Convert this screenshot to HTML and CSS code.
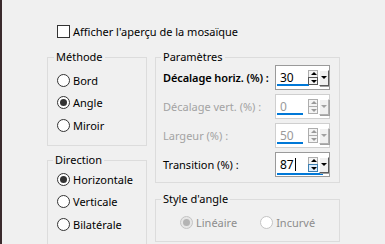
FILE: index.html
```html
<!DOCTYPE html>
<html lang="fr">

<head>
    <meta charset="UTF-8">
    <title>Mosaïque</title>
    <link rel="stylesheet" href="styles.css">
</head>

<body>
    <div class="dialog">
        <label class="check-row">
            <span class="checkbox"></span>
            Afficher l'aperçu de la mosaïque
        </label>

        <div class="columns">
            <div class="col-left">
                <fieldset class="group group-method">
                    <legend>Méthode</legend>
                    <div class="radio-row"><span class="radio"></span>Bord</div>
                    <div class="radio-row"><span class="radio checked"></span>Angle</div>
                    <div class="radio-row"><span class="radio"></span>Miroir</div>
                </fieldset>

                <fieldset class="group group-direction">
                    <legend>Direction</legend>
                    <div class="radio-row"><span class="radio checked"></span>Horizontale</div>
                    <div class="radio-row"><span class="radio"></span>Verticale</div>
                    <div class="radio-row"><span class="radio"></span>Bilatérale</div>
                </fieldset>
            </div>

            <div class="col-right">
                <fieldset class="group group-params">
                    <legend>Paramètres</legend>
                    <div class="param-row">
                        <span class="param-label focus">Décalage horiz. (%) :</span>
                        <div class="spin">
                            <span class="spin-value">30</span>
                            <span class="spin-bar"></span>
                            <span class="spin-buttons"><span class="up"></span><span class="down active"></span></span>
                            <span class="drop"></span>
                        </div>
                    </div>
                    <div class="param-row disabled">
                        <span class="param-label">Décalage vert. (%) :</span>
                        <div class="spin">
                            <span class="spin-value">0</span>
                            <span class="spin-bar short"></span>
                            <span class="spin-buttons"><span class="up"></span><span class="down"></span></span>
                            <span class="drop"></span>
                        </div>
                    </div>
                    <div class="param-row disabled">
                        <span class="param-label">Largeur (%) :</span>
                        <div class="spin">
                            <span class="spin-value">50</span>
                            <span class="spin-bar short"></span>
                            <span class="spin-buttons"><span class="up"></span><span class="down"></span></span>
                            <span class="drop"></span>
                        </div>
                    </div>
                    <div class="param-row">
                        <span class="param-label">Transition (%) :</span>
                        <div class="spin">
                            <span class="spin-value">87<span class="caret"></span></span>
                            <span class="spin-bar long"></span>
                            <span class="spin-buttons"><span class="up"></span><span class="down hover"></span></span>
                            <span class="drop"></span>
                        </div>
                    </div>
                </fieldset>

                <fieldset class="group group-style">
                    <legend>Style d'angle</legend>
                    <div class="style-row">
                        <div class="radio-row disabled"><span class="radio checked"></span>Linéaire</div>
                        <div class="radio-row disabled"><span class="radio"></span>Incurvé</div>
                    </div>
                </fieldset>
            </div>
        </div>
    </div>
</body>

</html>
```

FILE: styles.css
```css
body {
    margin: 0;
    background-color: #f0f0f0;
    font-family: "Noto Sans", sans-serif;
    font-size: 11px;
    color: #000;
    border-left: 2px solid #3a2a2c;
    height: 244px;
    box-sizing: border-box;
    overflow: hidden;
}

.dialog {
    padding: 23px 0 0 45px;
}

.check-row {
    display: flex;
    align-items: center;
    gap: 3px;
    height: 16px;
    margin-left: 10px;
}

.checkbox {
    width: 11px;
    height: 11px;
    border: 1px solid #333;
    background-color: #fff;
}

.columns {
    display: flex;
    gap: 8px;
    margin-top: 10px;
}

.col-left {
    width: 100px;
}

.col-right {
    width: 185px;
}

.group {
    margin: 0;
    border: 1px solid #dcdcdc;
    border-radius: 0;
    min-width: 0;
    box-sizing: border-box;
}

.group legend {
    padding: 0 2px;
    height: 16px;
    line-height: 16px;
}

.group-method {
    height: 97px;
    padding: 4px 0 0 9px;
}

.group-method legend {
    margin-left: -3px;
}

.group-direction {
    height: 95px;
    margin-top: 6px;
    padding: 0 0 0 9px;
}

.group-direction legend {
    margin-left: -4px;
}

.radio-row {
    display: flex;
    align-items: center;
    gap: 3px;
    height: 22.5px;
}

.radio {
    position: relative;
    width: 11px;
    height: 11px;
    border: 1px solid #333;
    border-radius: 50%;
    background-color: #fff;
}

.radio.checked::after {
    content: '';
    position: absolute;
    top: 2px;
    left: 2px;
    width: 7px;
    height: 7px;
    border-radius: 50%;
    background-color: #333;
}

.radio-row.disabled {
    color: #8d8d8d;
}

.radio-row.disabled .radio {
    border-color: #c4c4c4;
}

.radio-row.disabled .radio.checked {
    background-color: #e6e6e6;
}

.radio-row.disabled .radio.checked::after {
    background-color: #b4b4b4;
}

.group-params {
    height: 134px;
    padding: 0 0 0 7px;
}

.group-params legend {
    margin-left: -2px;
}

.param-row {
    display: flex;
    align-items: center;
    height: 25px;
    margin-bottom: 4px;
}

.param-label {
    flex: none;
    width: 112px;
    white-space: nowrap;
}

.param-label.focus {
    font-weight: 600;
    letter-spacing: -0.1px;
}

.param-row.disabled .param-label {
    color: #a3a3a3;
}

.spin {
    position: relative;
    display: flex;
    align-items: center;
    width: 53px;
    height: 23px;
    border: 1px solid #9a9a9a;
    background-color: #fff;
}

.param-row.disabled .spin {
    border-color: #cfcfcf;
}

.spin-value {
    width: 28px;
    padding-left: 4px;
    font-size: 12px;
}

.param-row.disabled .spin-value {
    color: #9a9a9a;
}

.caret {
    display: inline-block;
    width: 1px;
    height: 13px;
    margin-left: 1px;
    vertical-align: -2px;
    background-color: #000;
}

.spin-bar {
    position: absolute;
    left: 1px;
    bottom: 3px;
    width: 32px;
    height: 2px;
    background-color: #0078d7;
}

.spin-bar.short {
    width: 26px;
}

.spin-bar.long {
    width: 46px;
    bottom: 1px;
}

.spin-buttons {
    display: flex;
    flex-direction: column;
    width: 10px;
}

.spin-buttons span {
    position: relative;
    height: 6px;
    border: 1px solid #adadad;
    background-color: #f4f4f4;
}

.spin-buttons .down {
    margin-top: -1px;
}

.spin-buttons .down.active {
    border-color: #555;
}

.spin-buttons .down.hover {
    border-color: #3c7fb1;
    background-color: #dcecfc;
}

.spin-buttons .up::after,
.spin-buttons .down::after {
    content: '';
    position: absolute;
    left: 2px;
    border-left: 3px solid transparent;
    border-right: 3px solid transparent;
}

.spin-buttons .up::after {
    top: 1px;
    border-bottom: 3px solid #000;
}

.spin-buttons .down::after {
    top: 2px;
    border-top: 3px solid #000;
}

.param-row.disabled .spin-buttons .up::after {
    border-bottom-color: #9a9a9a;
}

.param-row.disabled .spin-buttons .down::after {
    border-top-color: #9a9a9a;
}

.drop {
    position: relative;
    width: 8px;
    height: 14px;
    margin-left: 1px;
    border-top: 1px solid #fff;
    border-left: 1px solid #fff;
    border-right: 1px solid #5a5a5a;
    border-bottom: 1px solid #5a5a5a;
    background-color: #f0f0f0;
    box-shadow: 1px 1px 0 #a0a0a0;
}

.drop::after {
    content: '';
    position: absolute;
    top: 5px;
    left: 1px;
    border-left: 3px solid transparent;
    border-right: 3px solid transparent;
    border-top: 3px solid #000;
}

.param-row.disabled .drop::after {
    border-top-color: #a0a0a0;
}

.param-row.disabled .drop {
    border-right-color: #b0b0b0;
    border-bottom-color: #b0b0b0;
}

.group-style {
    height: 51px;
    margin-top: 8px;
    padding: 4px 0 0 24px;
}

.group-style legend {
    margin-left: -19px;
}

.style-row {
    display: flex;
    gap: 23px;
}
```
